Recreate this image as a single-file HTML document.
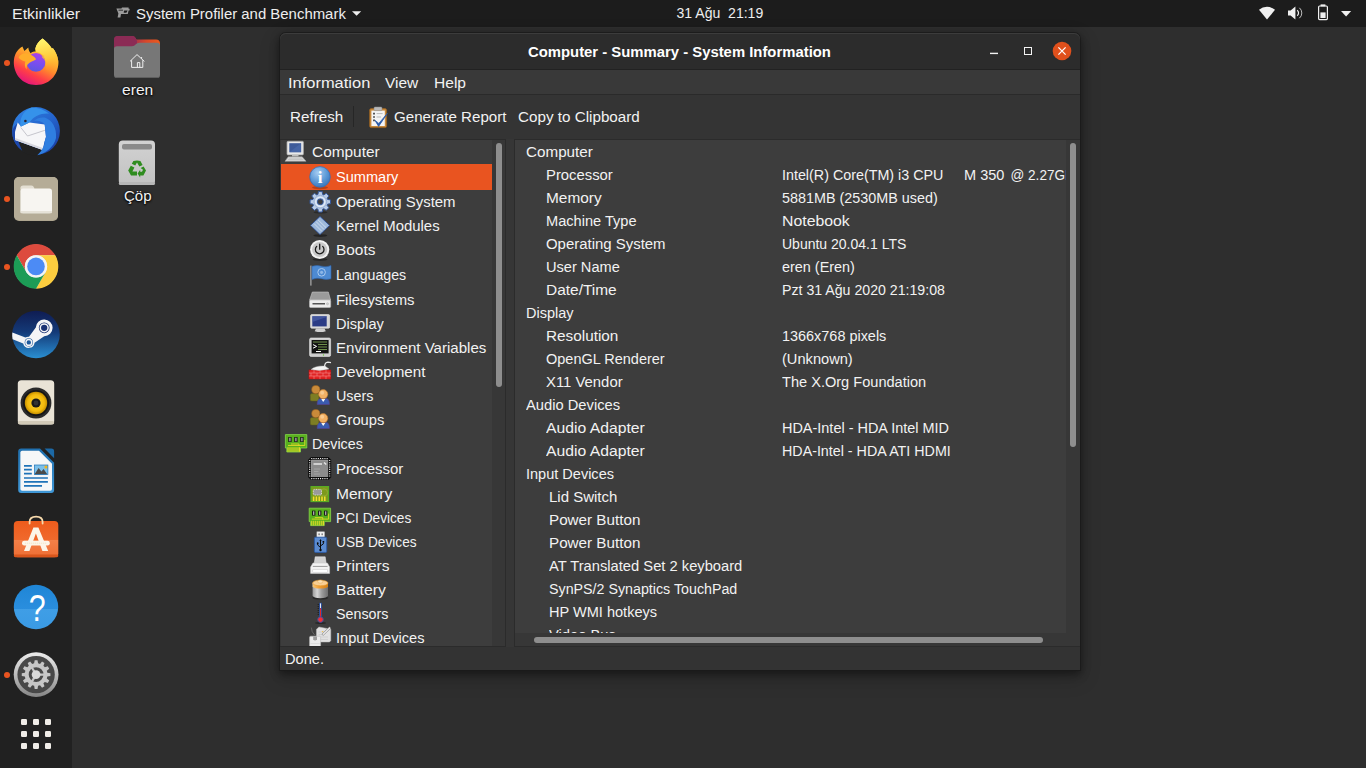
<!DOCTYPE html>
<html lang="tr">
<head>
<meta charset="utf-8">
<title>Computer - Summary - System Information</title>
<style>
*{box-sizing:border-box;margin:0;padding:0}
html,body{width:1366px;height:768px;overflow:hidden;background:#2e2e2e}
body{font-family:"Liberation Sans","DejaVu Sans",sans-serif;font-size:14px;color:#f2f2f2;position:relative}
.abs{position:absolute}
.t{position:absolute;white-space:pre;transform-origin:0 50%;line-height:20px;height:20px}
#topbar{position:absolute;left:0;top:0;width:1366px;height:27px;background:#1c1c1c;color:#eee}
#dock{position:absolute;left:0;top:27px;width:72px;height:741px;background:#212121}
#desktop .t{text-shadow:0 1px 2px #000,0 0 2px #000}
#win{position:absolute;left:280px;top:33px;width:800px;height:637px;background:#353535;border-radius:6px 6px 0 0;box-shadow:0 0 0 1px rgba(26,26,26,.8),0 3px 9px 1px rgba(0,0,0,.42),0 7px 20px 2px rgba(0,0,0,.16)}
#titlebar{position:absolute;left:0;top:0;width:800px;height:36px;background:#2c2c2c;border-radius:6px 6px 0 0;box-shadow:inset 0 1px 0 #3c3c3c}
#tsep{position:absolute;left:0;top:36px;width:800px;height:1px;background:#222}
#menubar{position:absolute;left:0;top:37px;width:800px;height:24px;background:#393939}
#msep{position:absolute;left:0;top:61px;width:800px;height:1px;background:#2a2a2a}
#toolbar{position:absolute;left:0;top:62px;width:800px;height:44px;background:#343434}
#body{position:absolute;left:0;top:106px;width:800px;height:508px;background:#363636}
#tree{position:absolute;left:1px;top:107px;width:211px;height:506px;background:#3d3d3d;overflow:hidden}
#treesb{position:absolute;left:212px;top:107px;width:13px;height:506px;background:#373737}
#treeborder{position:absolute;left:0;top:106px;width:226px;height:508px;border:1px solid #2b2b2b;border-left:0}
#detail{position:absolute;left:235px;top:107px;width:551px;height:493px;background:#3d3d3d;overflow:hidden}
#detailborder{position:absolute;left:234px;top:106px;width:566px;height:508px;border:1px solid #2b2b2b;border-right:0;background:#373737}
#status{position:absolute;left:0;top:614px;width:800px;height:23px;background:#333}
.thumb{position:absolute;background:#8e8e8e;border-radius:3px}
.sel{position:absolute;left:0;top:24px;width:211px;height:26px;background:#e95420}
</style>
</head>
<body>

<div id="topbar">
<span class="t" style="left:12px;top:4.1px;transform:scaleX(1.138);">Etkinlikler</span>
<svg class="abs" style="left:115px;top:6px" width="16" height="14" viewBox="115 6 16 14" ><path d="M116.4 8.6H121.4L122 7.6H128.6V8.8H129.6V10.4H124.2L123.6 12.6Q125 13 126.6 12.6L127.6 10.6H128.6L127.8 14H121L120.4 17.6H117.6L118.4 13.6L117 10Z" fill="#9c9c9c"/><path d="M118.5 10.2H123" stroke="#1c1c1c" stroke-width=".8"/></svg>
<span class="t" style="left:136px;top:4.1px;transform:scaleX(1.066);">System Profiler and Benchmark</span>
<svg class="abs" style="left:351px;top:10px" width="12" height="8" viewBox="351 10 12 8" ><path d="M352 11.2H361.2L356.6 15.8Z" fill="#eee"/></svg>
<span class="t" style="left:676px;top:3.1px;transform:translateX(0.50px) scaleX(1.004);">31 Ağu  21:19</span>
<svg class="abs" style="left:1258px;top:5px" width="18" height="16" viewBox="1258 5 18 16" ><path d="M1267 19.6L1259 9.8A12.4 12.4 0 0 1 1275 9.8Z" fill="#f0f0f0"/></svg>
<svg class="abs" style="left:1286px;top:5px" width="18" height="16" viewBox="1286 5 18 16" ><path d="M1288 10.6H1290.6L1295.4 6.4V19.6L1290.6 15.4H1288Z" fill="#f0f0f0"/><path d="M1297.2 10.2A3.6 3.6 0 0 1 1297.2 15.8" fill="none" stroke="#f0f0f0" stroke-width="1.2"/><path d="M1299.4 7.8A6.8 6.8 0 0 1 1299.4 18.2" fill="none" stroke="#bdbdbd" stroke-width="1"/></svg>
<svg class="abs" style="left:1316px;top:3px" width="14" height="19" viewBox="1316 3 14 19" ><rect x="1320.6" y="4.4" width="4.8" height="2" fill="#f0f0f0"/><rect x="1318.6" y="6" width="8.8" height="13.6" rx="1" fill="none" stroke="#f0f0f0" stroke-width="1.2"/><rect x="1320.4" y="12.4" width="5.2" height="5.6" fill="#f0f0f0"/></svg>
<svg class="abs" style="left:1340px;top:10px" width="12" height="8" viewBox="1340 10 12 8" ><path d="M1341 11H1351.2L1346.1 16.4Z" fill="#f0f0f0"/></svg>
</div>
<div id="dock"></div>
<svg class="abs" style="left:11px;top:36px" width="50" height="52" viewBox="11 36 50 52" ><defs><linearGradient id="ff1" gradientUnits="userSpaceOnUse" x1="50" y1="42" x2="27" y2="86"><stop offset="0" stop-color="#fff261"/><stop offset=".28" stop-color="#ffc232"/><stop offset=".52" stop-color="#ff8a2c"/><stop offset=".74" stop-color="#ff3f47"/><stop offset="1" stop-color="#e00f84"/></linearGradient>
<linearGradient id="ff2" gradientUnits="userSpaceOnUse" x1="38" y1="52" x2="33" y2="72"><stop offset="0" stop-color="#b23fe6"/><stop offset=".5" stop-color="#7d4df0"/><stop offset="1" stop-color="#5a57e0"/></linearGradient>
<linearGradient id="ff3" gradientUnits="userSpaceOnUse" x1="44" y1="40" x2="52" y2="70"><stop offset="0" stop-color="#fff36a"/><stop offset=".6" stop-color="#ffc83a"/><stop offset="1" stop-color="#ff9a2a" stop-opacity="0"/></linearGradient></defs>
<path d="M42.6 38.6C46 41.4 50 45 52 48.8L52.8 48C55.6 51.6 57.6 56 58.3 61C59.2 72 51.6 85 36 85C22 85 13.8 74 13.8 62.5C13.8 55 17 49.5 22.4 46.5L24.4 51L28.3 47.6C28.5 50 29.4 52 30.6 53.2C32.4 52 34 51.6 35.6 51.6L35.3 48.8C36 45 39 41 42.6 38.6Z" fill="url(#ff1)"/>
<circle cx="36" cy="62.4" r="9.4" fill="url(#ff2)"/>
<path d="M42.6 38.6C46 41.4 50 45 52 48.8L52.8 48C55.6 51.6 57.6 56 58.3 61C58.6 66 57.4 71 54.6 75C50 78 45 74 45.4 62.4C45.4 57 42 53 36 51.6L35.3 48.8C36 45 39 41 42.6 38.6Z" fill="url(#ff3)"/>
<path d="M40 54.2C42 54.2 43.6 55 44.8 56.2C43.6 56 42.4 56.2 41.6 56.8C44 58.6 45.4 61 45.4 62.4C45.4 59 43 55.6 40 54.2Z" fill="#ffb83a"/>
<path d="M18.6 57.6C20 54.4 24 52.6 27.6 53.6C30.6 54 34 56.4 36.2 59.2C33.6 61.4 30 61.6 27.6 64.4C26.6 66 26.4 68 26.8 69.6C24.6 67.4 24.4 64 25.4 61.6C22.6 61.2 20 59.6 18.6 57.6Z" fill="#ffad2a"/></svg>
<svg class="abs" style="left:11px;top:105px" width="50" height="52" viewBox="11 105 50 52" ><defs><linearGradient id="tb1" gradientUnits="userSpaceOnUse" x1="20" y1="110" x2="52" y2="152"><stop offset="0" stop-color="#2f7fe0"/><stop offset=".5" stop-color="#2463cc"/><stop offset="1" stop-color="#1b3fa4"/></linearGradient></defs>
<circle cx="36" cy="131" r="23.9" fill="url(#tb1)"/>
<path d="M12.2 131A23.9 23.9 0 0 0 22.5 150.8L19 141.6L15 140V132L17.7 123Q14 126 12.2 131Z" fill="#1c47ac"/>
<path d="M18.4 141.4L42.7 150L37.3 155.4A24.3 24.3 0 0 1 22.3 151.2Z" fill="#212121"/>
<path d="M15 132L17.7 122.6L21 126.4L29.4 122.6L44.7 124.4L46 137L44.2 143L42.7 149.9L15 140Z" fill="#f6f6f8"/>
<path d="M15 140L42.7 149.9L43 148L15.2 138Z" fill="#d6d6de"/>
<path d="M20.8 127.5L27.5 136L44.9 130.3" fill="none" stroke="#b9b9c2" stroke-width=".8"/>
<path d="M20.6 126.6C19.4 120 22 111 31.8 107.5C38 107.6 44 109.6 49 113.6C42 112.8 34 115.4 29.4 122.6L21.2 126.6Z" fill="#3592ea"/>
<path d="M44.7 117.6C52 120 57 128 56 138C54 147 46 153 37.3 155.3C43 150 45 144 46 137L44.7 124.4C42 121 38 120 34 121C37 118 41 117 44.7 117.6Z" fill="#2f7ee0"/>
<path d="M46 137L49 134L48 139L51 137L48.6 142L44.2 143Z" fill="#2f7ee0"/>
<circle cx="25.4" cy="121" r="1.3" fill="#2a2230"/></svg>
<svg class="abs" style="left:13px;top:176px" width="46" height="46" viewBox="13 176 46 46" ><rect x="14" y="177" width="44" height="44" rx="5" fill="#aea58f"/><rect x="14" y="177" width="44" height="43" rx="5" fill="#b5ac97"/>
<path d="M20.4 188.4Q20.4 185.6 23.2 185.6H31.4Q33.4 185.6 34 187.4L34.6 189.4H20.4Z" fill="#e4dfd3"/>
<rect x="20.4" y="188.6" width="31.6" height="24.6" rx="2.6" fill="#f7f5f1"/><rect x="20.4" y="211" width="31.6" height="2.2" rx="1" fill="#e6e2d8"/></svg>
<svg class="abs" style="left:12px;top:243px" width="48" height="48" viewBox="12 243 48 48" ><circle cx="36" cy="266.4" r="21.8" fill="#e8e8e8"/><path d="M36.00 255.25L55.31 255.25A22.3 22.3 0 0 0 16.69 255.25L26.34 271.97A11.15 11.15 0 0 1 36.00 255.25Z" fill="#dd4b3e"/><path d="M45.66 271.97L36.00 288.70A22.3 22.3 0 0 0 55.31 255.25L36.00 255.25A11.15 11.15 0 0 1 45.66 271.97Z" fill="#fccd3f"/><path d="M26.34 271.97L16.69 255.25A22.3 22.3 0 0 0 36.00 288.70L45.66 271.97A11.15 11.15 0 0 1 26.34 271.97Z" fill="#1c9c56"/><circle cx="36" cy="266.4" r="11.15" fill="#f4f4f4"/><circle cx="36" cy="266.4" r="8.8085" fill="#4c8bf5"/></svg>
<svg class="abs" style="left:11px;top:309px" width="50" height="51" viewBox="11 309 50 51" ><defs><linearGradient id="st1" x1="0" y1="0" x2="0" y2="1"><stop offset="0" stop-color="#0f1c52"/><stop offset=".45" stop-color="#143a78"/><stop offset="1" stop-color="#2a8fd2"/></linearGradient></defs>
<circle cx="36" cy="334.5" r="23.8" fill="url(#st1)"/>
<path d="M12.3 332.4L25.4 337.6A5.8 5.8 0 0 1 29 336.8L35.8 327.6A8.4 8.4 0 1 1 44.2 336.2L34.6 342.8A5.8 5.8 0 0 1 23.2 343.4L12.6 339.2Q12 336 12.3 332.4Z" fill="#f4f4f6"/>
<circle cx="44.2" cy="327.8" r="5.4" fill="#1a3274"/><circle cx="44.2" cy="327.8" r="3.9" fill="none" stroke="#f4f4f6" stroke-width="1.5"/>
<circle cx="28.8" cy="342.4" r="4.1" fill="#1f5a9c"/><circle cx="28.8" cy="342.4" r="2.9" fill="none" stroke="#f4f4f6" stroke-width="1.4"/></svg>
<svg class="abs" style="left:16px;top:379px" width="40" height="47" viewBox="16 379 40 47" ><defs><radialGradient id="rb1"><stop offset="0" stop-color="#ffd62e"/><stop offset=".75" stop-color="#f2b90c"/><stop offset="1" stop-color="#c48f00"/></radialGradient></defs>
<rect x="17.8" y="380.2" width="36.4" height="44.4" rx="3.6" fill="#e9e3d6"/><rect x="17.8" y="421" width="36.4" height="3.6" rx="1.8" fill="#d2cab8"/>
<circle cx="36" cy="403" r="15.4" fill="#2a2a2a"/><circle cx="36" cy="403" r="13" fill="#151515"/><circle cx="36" cy="403" r="11.2" fill="url(#rb1)"/><circle cx="36" cy="403" r="4.6" fill="#1a1a1a"/><circle cx="36" cy="403" r="2.4" fill="#333"/></svg>
<svg class="abs" style="left:16px;top:447px" width="40" height="47" viewBox="16 447 40 47" ><defs><linearGradient id="lo1" x1="0" y1="0" x2="0" y2="1"><stop offset="0" stop-color="#1f6fae"/><stop offset="1" stop-color="#3f97d6"/></linearGradient></defs>
<path d="M21.2 448.6H40L54.1 462.8V490Q54.1 493 51.1 493H21.2Q18.2 493 18.2 490V451.6Q18.2 448.6 21.2 448.6Z" fill="url(#lo1)"/>
<path d="M22.2 450.8H39L52 463.8V489Q52 490.8 50.2 490.8H22.2Q20.4 490.8 20.4 489V452.6Q20.4 450.8 22.2 450.8Z" fill="#f6f7f8"/>
<path d="M44.6 448.6H51.4Q54.1 448.6 54.1 451.4V458.2Z" fill="#1c69a6"/>
<path d="M24 465.8H31.8M24 469.7H31.8M24 473.6H31.8M24 478H47.9M24 481.9H47.9M24 485.8H42" stroke="#1f73b8" stroke-width="1.7"/>
<rect x="34.4" y="465" width="13.5" height="9.4" fill="#7cc0ea"/><path d="M34.4 474.4L38.6 468L41.4 471.4L43.6 469L47.4 474.4Z" fill="#4a4a4a"/><rect x="44.6" y="465.6" width="2.8" height="2.8" fill="#f4b41c"/><rect x="34.4" y="465" width="13.5" height="9.4" fill="none" stroke="#1f73b8" stroke-width=".7"/></svg>
<svg class="abs" style="left:12px;top:512px" width="48" height="47" viewBox="12 512 48 47" ><defs><linearGradient id="us1" x1="0" y1="0" x2="0" y2="1"><stop offset="0" stop-color="#ee5c1c"/><stop offset=".52" stop-color="#f0692c"/><stop offset=".52" stop-color="#f48048"/><stop offset="1" stop-color="#ee6e34"/></linearGradient></defs>
<rect x="13.8" y="521" width="44.5" height="36.2" rx="4" fill="url(#us1)"/><path d="M29.6 523.6V522Q29.6 516.6 36.1 516.6T42.6 522V523.6" fill="none" stroke="#f6d9ac" stroke-width="1.8" stroke-linecap="round"/><rect x="13.8" y="554.4" width="44.5" height="2.8" rx="1.4" fill="#d9561c"/>
<path d="M24 551L33.4 527.5H38.4L48.2 551H42.4L35.9 533.4L29.4 551Z" fill="#fcf5e8"/><rect x="22" y="540.8" width="27.8" height="4.7" rx="2.2" fill="#fcf5e8"/><path d="M25 543.2H47" stroke="#f0dcb4" stroke-width=".6" stroke-dasharray="1.2 .8"/></svg>
<svg class="abs" style="left:12px;top:583px" width="48" height="48" viewBox="12 583 48 48" ><defs><linearGradient id="hp1" x1="0" y1="0" x2="0" y2="1"><stop offset="0" stop-color="#1f86d6"/><stop offset=".55" stop-color="#2a8ede"/><stop offset=".55" stop-color="#3f9ee6"/><stop offset="1" stop-color="#3a9ae4"/></linearGradient></defs>
<circle cx="36" cy="607" r="22.2" fill="url(#hp1)"/>
<text x="37.2" y="621" font-family="Liberation Sans,sans-serif" font-size="37" text-anchor="middle" fill="#fff" transform="translate(37.2 0) scale(.82 1) translate(-37.2 0)">?</text></svg>
<svg class="abs" style="left:12px;top:651px" width="48" height="48" viewBox="12 651 48 48" ><defs><linearGradient id="gt1" x1="0" y1="0" x2="0" y2="1"><stop offset="0" stop-color="#ececec"/><stop offset=".5" stop-color="#bdbdbd"/><stop offset="1" stop-color="#858585"/></linearGradient></defs>
<circle cx="36.1" cy="674.6" r="22.4" fill="url(#gt1)"/><circle cx="36.1" cy="674.6" r="18.7" fill="#484848"/>
<path d="M47.33 672.64 L50.43 673.19 L50.43 676.01 L47.33 676.56 L46.81 678.52 L49.22 680.54 L47.80 682.99 L44.85 681.91 L43.41 683.35 L44.49 686.30 L42.04 687.72 L40.02 685.31 L38.06 685.83 L37.51 688.93 L34.69 688.93 L34.14 685.83 L32.18 685.31 L30.16 687.72 L27.71 686.30 L28.79 683.35 L27.35 681.91 L24.40 682.99 L22.98 680.54 L25.39 678.52 L24.87 676.56 L21.77 676.01 L21.77 673.19 L24.87 672.64 L25.39 670.68 L22.98 668.66 L24.40 666.21 L27.35 667.29 L28.79 665.85 L27.71 662.90 L30.16 661.48 L32.18 663.89 L34.14 663.37 L34.69 660.27 L37.51 660.27 L38.06 663.37 L40.02 663.89 L42.04 661.48 L44.49 662.90 L43.41 665.85 L44.85 667.29 L47.80 666.21 L49.22 668.66 L46.81 670.68Z M28.70 674.60 a7.40 7.40 0 1 0 14.80 0 a7.40 7.40 0 1 0 -14.80 0Z" fill="#c6c6c6" fill-rule="evenodd"/>
<path d="M36.1 674.6H45M36.1 674.6L31.4 666.8M36.1 674.6L31.4 682.4" stroke="#c6c6c6" stroke-width="2.2"/>
<circle cx="36.1" cy="674.6" r="4.4" fill="#dadada"/></svg>
<svg class="abs" style="left:20px;top:718px" width="32" height="32" viewBox="20 718 32 32" ><rect x="21" y="719" width="6" height="6" rx="1.2" fill="#f0ede8"/><rect x="33" y="719" width="6" height="6" rx="1.2" fill="#f0ede8"/><rect x="45" y="719" width="6" height="6" rx="1.2" fill="#f0ede8"/><rect x="21" y="731" width="6" height="6" rx="1.2" fill="#f0ede8"/><rect x="33" y="731" width="6" height="6" rx="1.2" fill="#f0ede8"/><rect x="45" y="731" width="6" height="6" rx="1.2" fill="#f0ede8"/><rect x="21" y="743" width="6" height="6" rx="1.2" fill="#f0ede8"/><rect x="33" y="743" width="6" height="6" rx="1.2" fill="#f0ede8"/><rect x="45" y="743" width="6" height="6" rx="1.2" fill="#f0ede8"/></svg>
<div class="abs" style="left:4px;top:59.5px;width:6px;height:6px;border-radius:50%;background:#e95420"></div>
<div class="abs" style="left:4px;top:196px;width:6px;height:6px;border-radius:50%;background:#e95420"></div>
<div class="abs" style="left:4px;top:264px;width:6px;height:6px;border-radius:50%;background:#e95420"></div>
<div class="abs" style="left:4px;top:672px;width:6px;height:6px;border-radius:50%;background:#e95420"></div>
<div id="desktop">
<svg class="abs" style="left:113px;top:35px" width="48" height="44" viewBox="113 35 48 44" ><defs><linearGradient id="fo1" x1="0" x2="1"><stop offset="0" stop-color="#8b2b55"/><stop offset=".45" stop-color="#a8324a"/><stop offset=".7" stop-color="#d8482a"/><stop offset="1" stop-color="#ea5a1e"/></linearGradient></defs>
<path d="M114 40Q114 36 118 36H132Q134.6 36 135.6 38L136.4 39.4H156Q160 39.4 160 43.4V60H114Z" fill="url(#fo1)"/>
<path d="M114 39.6Q114 36 118 36H132Q134.6 36 135.6 38L137 41V47H114Z" fill="#8b2b55"/>
<path d="M114 49Q114 46.2 117 46.2H132Q134.4 46.2 135.6 44.6Q137 42.8 139.4 42.8H157Q160 42.8 160 45.8V75Q160 78 157 78H117Q114 78 114 75Z" fill="#777"/>
<path d="M114 74.4V75Q114 78 117 78H157Q160 78 160 75V74.4Q160 77 157 77H117Q114 77 114 74.4Z" fill="#5e5e5e"/>
<path d="M130 61.4L137 54.6L144.4 61.4M131.6 60.2V67.4H142.8V60.2M137.4 67.4V62.6H139.8V67.4M141.6 58.6V57" fill="none" stroke="#efefef" stroke-width="1"/></svg>
<span class="t" style="left:122px;top:79.8px;transform:scaleX(1.116);">eren</span>
<svg class="abs" style="left:117px;top:139px" width="40" height="48" viewBox="117 139 40 48" ><defs><linearGradient id="tr1" x1="0" y1="0" x2="0" y2="1"><stop offset="0" stop-color="#d2d2d2"/><stop offset="1" stop-color="#c2c2c2"/></linearGradient></defs>
<rect x="118.8" y="140.4" width="36.2" height="44.6" rx="4" fill="url(#tr1)"/><rect x="118.8" y="182" width="36.2" height="3" rx="1.5" fill="#b6b6b6"/>
<rect x="122" y="144" width="30" height="5.6" rx="2" fill="#8a8a8a"/>
<g fill="#2f8c1f"><path d="M133.4 161L137 160.4L140.4 161L142.6 165L139.4 166.6L137 162.4L135.2 165.6L131.8 163.8Z"/><path d="M130.8 165.8L134.4 167.6L132.4 171.6H137V175.6H131L128.2 170.6Z"/><path d="M143.6 166.4L146 170.6L143.4 175.6H140.2V177.6L137.6 173.6L140.2 169.8V171.8H142L143 169.8L140.6 168Z"/></g></svg>
<span class="t" style="left:124px;top:185.9px;transform:scaleX(1.075);">Çöp</span>
</div>
<div id="win">
<div id="titlebar"></div><div id="tsep"></div><div id="menubar"></div><div id="msep"></div><div id="toolbar"></div><div id="body"></div>
<span class="t" style="left:248px;top:8.7px;font-weight:bold;color:#fff;transform:scaleX(1.061);">Computer - Summary - System Information</span>
<svg class="abs" style="left:708px;top:7px" width="90" height="24" viewBox="988 40 90 24" ><rect x="990" y="52.7" width="8" height="1.4" fill="#f2f2f2"/>
<rect x="1024.5" y="47.5" width="7" height="7" fill="none" stroke="#f4f4f4" stroke-width="1"/>
<circle cx="1062" cy="51" r="9.3" fill="#e0501c"/><path d="M1058.4 47.4L1065.6 54.6M1065.6 47.4L1058.4 54.6" stroke="#fff" stroke-width="1.3"/></svg>
<span class="t" style="left:8px;top:39.8px;transform:scaleX(1.175);">Information</span>
<span class="t" style="left:105px;top:39.8px;transform:scaleX(1.104);">View</span>
<span class="t" style="left:154px;top:39.8px;transform:scaleX(1.112);">Help</span>
<span class="t" style="left:10px;top:74.0px;transform:scaleX(1.086);">Refresh</span>
<div class="abs" style="left:73px;top:73px;width:1px;height:21px;background:#262626"></div>
<svg class="abs" style="left:88px;top:73px" width="22" height="24" viewBox="368 106 22 24" ><rect x="369.6" y="108.6" width="17" height="19" rx="1.6" fill="#c98a3c" stroke="#9a601c" stroke-width=".7"/>
<rect x="371.4" y="110.6" width="13.4" height="15.4" fill="#f4f4f4"/>
<rect x="374" y="107" width="8" height="3.6" rx="1" fill="#b9b9b9" stroke="#8a8a8a" stroke-width=".5"/>
<path d="M373 113.6H375M373 117H375M373 120.4H375" stroke="#555" stroke-width="1.6"/><path d="M376.6 113.6H382.6M376.6 117H381" stroke="#aaa" stroke-width=".8"/>
<path d="M375 120.4L378.6 126.4L387.4 113.4L378.8 123.4Z" fill="#2a5aa8" stroke="#2a5aa8" stroke-width=".8" stroke-linejoin="round"/></svg>
<span class="t" style="left:114px;top:74.0px;transform:scaleX(1.078);">Generate Report</span>
<span class="t" style="left:238px;top:74.0px;transform:scaleX(1.087);">Copy to Clipboard</span>
<div id="treeborder"></div><div id="treesb"><div class="thumb" style="left:4px;top:3px;width:6px;height:244px"></div></div>
<div id="tree"><div class="sel"></div>
<svg class="abs" style="left:3px;top:0px" width="24" height="23" viewBox="284 140 24 23" ><rect x="287" y="141.3" width="16.4" height="13.6" rx="1" fill="#e9e9e9" stroke="#a8a8a8" stroke-width=".8"/>
<rect x="289.3" y="143.2" width="11.8" height="9" fill="#3d5a99"/><path d="M289.3 152.2L301.1 143.2V152.2Z" fill="#4a69ab" opacity=".7"/>
<rect x="292" y="154.9" width="6.5" height="1.6" fill="#bdbdbd"/>
<path d="M288.3 156.8H302.2L306 161.2H285Z" fill="#e4e4e4" stroke="#9c9c9c" stroke-width=".7"/><path d="M288.5 158.2H302.6M287.6 159.6H303.6" stroke="#aaa" stroke-width=".6"/></svg>
<svg class="abs" style="left:27px;top:25px" width="25" height="25" viewBox="308 165 25 25" ><defs><radialGradient id="gi" cx=".4" cy=".3" r=".8"><stop offset="0" stop-color="#a6cdf2"/><stop offset=".55" stop-color="#5b98d6"/><stop offset="1" stop-color="#2f6bb5"/></radialGradient></defs>
<ellipse cx="320" cy="187.6" rx="8" ry="1.6" fill="#7a2a10" opacity=".45"/>
<circle cx="320" cy="176.9" r="10.3" fill="url(#gi)" stroke="#3a6fb4" stroke-width=".8"/>
<text x="320" y="183" font-family="Liberation Serif,serif" font-weight="bold" font-size="17" text-anchor="middle" fill="#fff">i</text></svg>
<svg class="abs" style="left:27px;top:50px" width="25" height="25" viewBox="308 190 25 25" ><ellipse cx="320.5" cy="212.3" rx="7" ry="1.3" fill="#000" opacity=".3"/>
<path d="M327.64 199.48 L330.53 199.91 L330.53 203.69 L327.64 204.12 L327.13 205.35 L328.87 207.70 L326.20 210.37 L323.85 208.63 L322.62 209.14 L322.19 212.03 L318.41 212.03 L317.98 209.14 L316.75 208.63 L314.40 210.37 L311.73 207.70 L313.47 205.35 L312.96 204.12 L310.07 203.69 L310.07 199.91 L312.96 199.48 L313.47 198.25 L311.73 195.90 L314.40 193.23 L316.75 194.97 L317.98 194.46 L318.41 191.57 L322.19 191.57 L322.62 194.46 L323.85 194.97 L326.20 193.23 L328.87 195.90 L327.13 198.25Z M317.40 201.80 a2.90 2.90 0 1 0 5.80 0 a2.90 2.90 0 1 0 -5.80 0Z" fill="#b9cce6" stroke="#34589c" stroke-width="1" fill-rule="evenodd" stroke-linejoin="round"/>
<circle cx="320.3" cy="201.8" r="4.6" fill="none" stroke="#e4ecf8" stroke-width="1.3"/><circle cx="320.3" cy="201.8" r="6.4" fill="none" stroke="#9ab2d8" stroke-width="1"/></svg>
<svg class="abs" style="left:27px;top:74px" width="25" height="25" viewBox="308 214 25 25" ><ellipse cx="320.3" cy="235.6" rx="7" ry="1.4" fill="#000" opacity=".4"/>
<path d="M320 216.4L329.6 225.4L320 234.6L310.5 225.4Z" fill="#9db8da" stroke="#2d4f95" stroke-width=".9" stroke-linejoin="round"/>
<path d="M316 221.5L324 229.5M318 219.8L326 227.6M314 223.5L322 231.5" stroke="#e6eef8" stroke-width=".9" opacity=".7"/></svg>
<svg class="abs" style="left:27px;top:98px" width="25" height="25" viewBox="308 238 25 25" ><ellipse cx="320" cy="259.6" rx="7.5" ry="1.4" fill="#000" opacity=".35"/>
<circle cx="319.7" cy="249.5" r="9.6" fill="#f2f2f2"/><circle cx="319.7" cy="249.5" r="7.6" fill="#c9c9c9"/>
<path d="M316.7 246.4a4.3 4.3 0 1 0 6 0M319.7 244.2v5" fill="none" stroke="#1c1c1c" stroke-width="1.3" stroke-linecap="round"/></svg>
<svg class="abs" style="left:27px;top:123px" width="25" height="25" viewBox="308 263 25 25" ><rect x="310" y="265.6" width="1.7" height="20" fill="#8c8c8c"/>
<path d="M312 266.3Q317 264.8 321.5 266.2T331 265.6V278.8Q326 280 321.5 278.7T312 279.4Z" fill="#4d8ad2" stroke="#2f67b0" stroke-width=".6"/>
<circle cx="321.6" cy="272.3" r="3.8" fill="none" stroke="#a9c9ee" stroke-width="1"/><circle cx="321.6" cy="272.3" r="1.6" fill="#8db6e6"/></svg>
<svg class="abs" style="left:27px;top:149px" width="25" height="22" viewBox="308 289 25 22" ><path d="M312.3 292H328.3L330.6 300H309.6Z" fill="#9b9b9b" stroke="#c8c8c8" stroke-width=".6"/>
<rect x="309.5" y="300" width="21.2" height="7.5" rx="1" fill="#ececec" stroke="#bdbdbd" stroke-width=".6"/>
<rect x="312.5" y="303" width="12.5" height="1.5" fill="#555"/><circle cx="327.5" cy="303.8" r="1.1" fill="#cfcfcf" stroke="#aaa" stroke-width=".4"/></svg>
<svg class="abs" style="left:27px;top:173px" width="25" height="22" viewBox="308 313 25 22" ><rect x="310.6" y="314.6" width="19" height="13.6" rx="1.2" fill="#d6d6d6" stroke="#f0f0f0" stroke-width=".6"/>
<rect x="312.3" y="316.2" width="14.4" height="10.2" fill="#2b3c86"/><path d="M312.3 322L326.7 317V316.2H312.3Z" fill="#5167ad" opacity=".6"/>
<path d="M316 328.4H324.5L325.8 331.2Q320.3 333 314.7 331.2Z" fill="#cfcfcf"/></svg>
<svg class="abs" style="left:27px;top:196px" width="25" height="23" viewBox="308 336 25 23" ><rect x="309.6" y="338" width="21" height="18.4" rx="1.5" fill="#cdcdcd" stroke="#eee" stroke-width=".6"/>
<rect x="311.6" y="340" width="17" height="13.4" fill="#121212"/>
<path d="M313 342H327M318 344.5H327M318 347H327M318 349.5H327" stroke="#6f8f4a" stroke-width="1"/><path d="M313 344.6L316.6 346.4L313 348.2" fill="none" stroke="#fff" stroke-width="1"/>
<rect x="316" y="351" width="5" height="1" fill="#fff"/><circle cx="323.5" cy="355" r=".7" fill="#6c3"/></svg>
<svg class="abs" style="left:27px;top:220px" width="25" height="22" viewBox="308 360 25 22" ><rect x="309" y="370" width="21.8" height="9" fill="#e02424" stroke="#b80f0f" stroke-width=".6"/>
<path d="M309 373H330.8M309 376H330.8M314 370V373M320 370V373M326 370V373M317 373V376M323 373V376M311 373V376M329 373V376M314 376V379M320 376V379M326 376V379" stroke="#f58a8a" stroke-width=".6"/>
<path d="M311 369.6Q315 365.5 325 366L329 369Q320 371.5 311 369.6Z" fill="#f4f4f4" stroke="#bbb" stroke-width=".4"/><path d="M324.5 367.5Q324.5 362.4 328 362.2L331 362.6" fill="none" stroke="#e8e8e8" stroke-width="1.2"/></svg>
<svg class="abs" style="left:27px;top:244px" width="25" height="22" viewBox="308 384 25 22" ><rect x="310.3" y="393.6" width="8.6" height="7.4" rx="1.6" fill="#7d7d24" stroke="#5f5f18" stroke-width=".5"/>
<circle cx="315.8" cy="389.6" r="4.1" fill="#c98a3a" stroke="#9a5f1c" stroke-width=".6"/>
<path d="M317.2 404.4Q317.2 399 320.5 398.6H326Q329.4 398.6 329.4 404.4V404.4H317.2Z" fill="#3a5cb0" stroke="#5b3f9a" stroke-width=".6"/>
<path d="M321.3 399L323.2 402L325.2 399Z" fill="#fff"/>
<circle cx="323.2" cy="394.2" r="4.6" fill="#f2b065" stroke="#c47a26" stroke-width=".6"/><circle cx="322.2" cy="392.8" r="2" fill="#f9d09a" opacity=".8"/></svg>
<svg class="abs" style="left:27px;top:268px" width="25" height="22" viewBox="308 408 25 22" ><rect x="310.3" y="417.6" width="8.6" height="7.4" rx="1.6" fill="#7d7d24" stroke="#5f5f18" stroke-width=".5"/>
<circle cx="315.8" cy="413.6" r="4.1" fill="#c98a3a" stroke="#9a5f1c" stroke-width=".6"/>
<path d="M317.2 428.4Q317.2 423 320.5 422.6H326Q329.4 422.6 329.4 428.4V428.4H317.2Z" fill="#3a5cb0" stroke="#5b3f9a" stroke-width=".6"/>
<path d="M321.3 423L323.2 426L325.2 423Z" fill="#fff"/>
<circle cx="323.2" cy="418.2" r="4.6" fill="#f2b065" stroke="#c47a26" stroke-width=".6"/><circle cx="322.2" cy="416.8" r="2" fill="#f9d09a" opacity=".8"/></svg>
<svg class="abs" style="left:3px;top:293px" width="25" height="21" viewBox="284 433 25 21" ><g transform="translate(0 0)"><path d="M285.4 434.6H306.8V448H300.5V452H286.8V448H285.4Z" fill="#58b01e" stroke="#86d84a" stroke-width=".8"/>
<g fill="#1a1a1a"><rect x="288.2" y="437" width="3.4" height="5"/><rect x="294.2" y="437" width="3.4" height="5"/><rect x="300.2" y="437" width="3.4" height="5"/></g>
<g fill="#bbb"><rect x="289.3" y="437.7" width="1.2" height="3.6"/><rect x="295.3" y="437.7" width="1.2" height="3.6"/><rect x="301.3" y="437.7" width="1.2" height="3.6"/></g>
<path d="M288 445.5H304.8V440M291 444H299V446" fill="none" stroke="#f0dc28" stroke-width=".8"/>
<path d="M288 447.2v4.6M290 447.2v4.6M292 447.2v4.6M294 447.2v4.6M296 447.2v4.6M298 447.2v4.6M299.6 447.2v4.6" stroke="#f0dc28" stroke-width="1"/></g></svg>
<svg class="abs" style="left:26px;top:316px" width="26" height="26" viewBox="307 456 26 26" ><path d="M311 457H328.4L331.2 459.8V477.2L328.4 480H311L308.2 477.2V459.8Z" fill="#0c0c0c"/>
<path d="M311.2 458.5H328.2M311.2 478.6H328.2M309.7 460V477M329.7 460V477" stroke="#f4f4f4" stroke-width="1.1" stroke-dasharray="1.1 1.1"/>
<rect x="311.4" y="460.2" width="16.8" height="16.8" fill="#8c8c8c"/><path d="M311.4 477V460.2H328.2" fill="none" stroke="#b5b5b5" stroke-width=".8"/>
<path d="M313.5 464H322M324 462.4L326.3 464.6" stroke="#e6e6e6" stroke-width="1.4"/><path d="M314 469H320M314 471.5H318.5M314 474H320" stroke="#a9a9a9" stroke-width=".8"/></svg>
<svg class="abs" style="left:27px;top:345px" width="25" height="19" viewBox="308 485 25 19" ><rect x="311" y="486.6" width="17.6" height="15" fill="#7d9a1c" stroke="#58b024" stroke-width="1.1"/>
<circle cx="324" cy="492.5" r="3.6" fill="none" stroke="#93ae3a" stroke-width=".8"/>
<rect x="313.3" y="489.4" width="8.2" height="5.6" rx="1" fill="#9a9a9a" stroke="#e4e4e4" stroke-width=".9" stroke-dasharray="1 .7"/>
<path d="M313.6 496.6V501M316.4 496.6V501M319.2 496.6V501M322 496.6V501M324.8 496.6V501" stroke="#f4e02c" stroke-width="1.5"/></svg>
<svg class="abs" style="left:27px;top:367px" width="25" height="21" viewBox="308 507 25 21" ><g transform="translate(23.8 73.6)"><path d="M285.4 434.6H306.8V448H300.5V452H286.8V448H285.4Z" fill="#58b01e" stroke="#86d84a" stroke-width=".8"/>
<g fill="#1a1a1a"><rect x="288.2" y="437" width="3.4" height="5"/><rect x="294.2" y="437" width="3.4" height="5"/><rect x="300.2" y="437" width="3.4" height="5"/></g>
<g fill="#bbb"><rect x="289.3" y="437.7" width="1.2" height="3.6"/><rect x="295.3" y="437.7" width="1.2" height="3.6"/><rect x="301.3" y="437.7" width="1.2" height="3.6"/></g>
<path d="M288 445.5H304.8V440M291 444H299V446" fill="none" stroke="#f0dc28" stroke-width=".8"/>
<path d="M288 447.2v4.6M290 447.2v4.6M292 447.2v4.6M294 447.2v4.6M296 447.2v4.6M298 447.2v4.6M299.6 447.2v4.6" stroke="#f0dc28" stroke-width="1"/></g></svg>
<svg class="abs" style="left:31px;top:390px" width="17" height="25" viewBox="312 530 17 25" ><rect x="316.9" y="531.8" width="7.6" height="5.6" fill="#f2f2f2" stroke="#bdbdbd" stroke-width=".5"/><rect x="318.3" y="533.4" width="1.6" height="1.8" fill="#888"/><rect x="321.4" y="533.4" width="1.6" height="1.8" fill="#888"/>
<rect x="314.4" y="537.2" width="12.3" height="15.2" rx="1.2" fill="#5b8bd0" stroke="#2a5aa6" stroke-width=".9"/>
<path d="M320.5 540V550M320.5 547.5L317.7 545V543.4M320.5 546L323.4 543.8V542.4" fill="none" stroke="#0a0a0a" stroke-width="1"/><circle cx="320.5" cy="550" r="1.2" fill="#0a0a0a"/><circle cx="317.7" cy="543.2" r=".9" fill="#0a0a0a"/><rect x="322.6" y="541" width="1.6" height="1.6" fill="#0a0a0a"/><path d="M319.4 541L320.5 539L321.6 541Z" fill="#0a0a0a"/></svg>
<svg class="abs" style="left:27px;top:415px" width="25" height="21" viewBox="308 555 25 21" ><path d="M315.2 556.8H325.2L326.4 565H314Z" fill="#d2d2d2" stroke="#f0f0f0" stroke-width=".5"/>
<path d="M313 563H327.4L329.6 567V573.4H310.6V567Z" fill="#f3f3f3" stroke="#c9c9c9" stroke-width=".6"/>
<rect x="312.6" y="569.4" width="15" height="3" rx=".6" fill="#fff" stroke="#c2c2c2" stroke-width=".5"/><path d="M312.8 566.4H327.6" stroke="#8f8f8f" stroke-width=".9"/></svg>
<svg class="abs" style="left:29px;top:437px" width="21" height="24" viewBox="310 577 21 24" ><defs><linearGradient id="gb" x1="0" x2="1"><stop offset="0" stop-color="#9a9a9a"/><stop offset=".3" stop-color="#d4d4d4"/><stop offset=".6" stop-color="#9c9c9c"/><stop offset="1" stop-color="#6e6e6e"/></linearGradient>
<linearGradient id="gbo" x1="0" x2="1"><stop offset="0" stop-color="#f7c77a"/><stop offset=".4" stop-color="#f2a136"/><stop offset="1" stop-color="#d07f18"/></linearGradient></defs>
<ellipse cx="320.3" cy="598" rx="8" ry="1.6" fill="#000" opacity=".35"/>
<path d="M312.6 583V595.6A7.7 2.6 0 0 0 328 595.6V583Z" fill="url(#gb)"/>
<path d="M312.6 583V586.2A7.7 2.4 0 0 0 328 586.2V583Z" fill="url(#gbo)"/>
<ellipse cx="320.3" cy="583" rx="7.7" ry="2.8" fill="#f8cf94" stroke="#e69a2e" stroke-width=".6"/>
<ellipse cx="320.3" cy="581.6" rx="2.6" ry="1.6" fill="#fbe0b4" stroke="#e0a040" stroke-width=".4"/></svg>
<svg class="abs" style="left:31px;top:461px" width="17" height="24" viewBox="312 601 17 24" ><ellipse cx="320.5" cy="623" rx="5.5" ry="1" fill="#000" opacity=".35"/>
<rect x="319.2" y="602.8" width="2.6" height="14" fill="#2a52a8"/><rect x="320" y="603.4" width="1" height="4.6" fill="#dfe8f8"/><rect x="320" y="608.4" width="1" height="9" fill="#e8242c"/>
<path d="M317.6 604.5H319M317.6 606.5H319M317.6 608.5H319M317.6 610.5H319M317.6 612.5H319M317.6 614.5H319" stroke="#111" stroke-width=".6"/>
<circle cx="320.5" cy="619.6" r="2.8" fill="#f03038" stroke="#2a52a8" stroke-width=".9"/></svg>
<svg class="abs" style="left:27px;top:486px" width="25" height="22" viewBox="308 626 25 22" ><path d="M317.5 628.2L319 627L330.8 629.2V640.6L329.6 642H316.4V629.6Z" fill="#e2e2e2" stroke="#b8b8b8" stroke-width=".5"/>
<path d="M318.6 632H326M318.6 634.6H324M318.6 637H328M318.6 639.4H328" stroke="#c8c8c8" stroke-width=".7"/><circle cx="322.6" cy="631.6" r=".7" fill="#f2c040"/>
<path d="M322.4 635L330.2 627.4" stroke="#8c8c8c" stroke-width="2.4"/><path d="M322.8 634.6L330 627.6" stroke="#fafafa" stroke-width="1.2"/>
<path d="M311.4 627.6Q311.4 632 314.6 635" fill="none" stroke="#777" stroke-width=".7"/>
<rect x="309.6" y="636.2" width="11" height="11" rx="1.2" fill="#ececec" stroke="#bcbcbc" stroke-width=".6"/><path d="M313.2 636.4V639.2Q315 641.6 317 639.2V636.4Z" fill="#9e9e9e"/><path d="M310.5 643.6H319.8" stroke="#d0d0d0" stroke-width=".6"/></svg>
<span class="t" style="left:31px;top:2.3px;transform:scaleX(1.101);">Computer</span>
<span class="t" style="left:55px;top:26.9px;color:#fff;transform:scaleX(1.041);">Summary</span>
<span class="t" style="left:55px;top:51.9px;transform:scaleX(1.067);">Operating System</span>
<span class="t" style="left:55px;top:76.3px;transform:scaleX(1.065);">Kernel Modules</span>
<span class="t" style="left:55px;top:99.8px;transform:scaleX(1.101);">Boots</span>
<span class="t" style="left:55px;top:124.8px;transform:scaleX(1.012);">Languages</span>
<span class="t" style="left:55px;top:149.9px;transform:scaleX(1.063);">Filesystems</span>
<span class="t" style="left:55px;top:173.9px;transform:scaleX(1.042);">Display</span>
<span class="t" style="left:55px;top:197.8px;transform:scaleX(1.075);">Environment Variables</span>
<span class="t" style="left:55px;top:221.8px;transform:scaleX(1.084);">Development</span>
<span class="t" style="left:55px;top:245.7px;transform:scaleX(1.025);">Users</span>
<span class="t" style="left:55px;top:269.7px;transform:scaleX(1.053);">Groups</span>
<span class="t" style="left:31px;top:293.9px;transform:scaleX(1.021);">Devices</span>
<span class="t" style="left:55px;top:318.9px;transform:scaleX(1.067);">Processor</span>
<span class="t" style="left:55px;top:343.9px;transform:scaleX(1.111);">Memory</span>
<span class="t" style="left:55px;top:368.3px;transform:scaleX(0.978);">PCI Devices</span>
<span class="t" style="left:55px;top:392.3px;transform:scaleX(0.977);">USB Devices</span>
<span class="t" style="left:55px;top:415.8px;transform:scaleX(1.110);">Printers</span>
<span class="t" style="left:55px;top:439.9px;transform:scaleX(1.123);">Battery</span>
<span class="t" style="left:55px;top:463.9px;transform:scaleX(1.020);">Sensors</span>
<span class="t" style="left:55px;top:487.8px;transform:scaleX(1.043);">Input Devices</span>
</div>
<div id="detailborder"></div>
<div class="thumb" style="left:790px;top:110px;width:6px;height:304px"></div>
<div class="thumb" style="left:254px;top:604px;width:509px;height:6px"></div>
<div id="detail">
<span class="t" style="left:11px;top:2.0px;transform:scaleX(1.087);">Computer</span>
<span class="t" style="left:31px;top:25.0px;transform:scaleX(1.059);">Processor</span>
<span class="t" style="left:267px;top:25.0px;transform:scaleX(1.022);">Intel(R) Core(TM) i3 CPU</span>
<span class="t" style="left:449px;top:25.0px;transform:scaleX(1.037);">M 350</span>
<span class="t" style="left:495px;top:25.0px;transform:translateX(0.50px) scaleX(0.970);">@ 2.27GHz</span>
<span class="t" style="left:31px;top:48.0px;transform:scaleX(1.101);">Memory</span>
<span class="t" style="left:267px;top:48.0px;transform:scaleX(1.026);">5881MB (2530MB used)</span>
<span class="t" style="left:31px;top:71.0px;transform:scaleX(1.042);">Machine Type</span>
<span class="t" style="left:267px;top:71.0px;transform:scaleX(1.131);">Notebook</span>
<span class="t" style="left:31px;top:94.0px;transform:scaleX(1.067);">Operating System</span>
<span class="t" style="left:267px;top:94.0px;">Ubuntu 20.04.1 LTS</span>
<span class="t" style="left:31px;top:117.0px;transform:scaleX(1.042);">User Name</span>
<span class="t" style="left:267px;top:117.0px;transform:scaleX(1.029);">eren (Eren)</span>
<span class="t" style="left:31px;top:140.0px;transform:scaleX(1.104);">Date/Time</span>
<span class="t" style="left:267px;top:140.0px;transform:scaleX(1.011);">Pzt 31 Ağu 2020 21:19:08</span>
<span class="t" style="left:11px;top:163.0px;transform:scaleX(1.035);">Display</span>
<span class="t" style="left:31px;top:186.0px;transform:scaleX(1.094);">Resolution</span>
<span class="t" style="left:267px;top:186.0px;transform:scaleX(1.031);">1366x768 pixels</span>
<span class="t" style="left:31px;top:209.0px;transform:scaleX(1.035);">OpenGL Renderer</span>
<span class="t" style="left:267px;top:209.0px;transform:scaleX(1.045);">(Unknown)</span>
<span class="t" style="left:31px;top:232.0px;transform:scaleX(1.062);">X11 Vendor</span>
<span class="t" style="left:267px;top:232.0px;transform:scaleX(1.041);">The X.Org Foundation</span>
<span class="t" style="left:11px;top:255.0px;transform:scaleX(1.051);">Audio Devices</span>
<span class="t" style="left:31px;top:278.0px;transform:scaleX(1.123);">Audio Adapter</span>
<span class="t" style="left:267px;top:278.0px;transform:scaleX(1.032);">HDA-Intel - HDA Intel MID</span>
<span class="t" style="left:31px;top:301.0px;transform:scaleX(1.123);">Audio Adapter</span>
<span class="t" style="left:267px;top:301.0px;transform:scaleX(1.020);">HDA-Intel - HDA ATI HDMI</span>
<span class="t" style="left:11px;top:324.0px;transform:scaleX(1.037);">Input Devices</span>
<span class="t" style="left:34px;top:347.0px;transform:scaleX(1.071);">Lid Switch</span>
<span class="t" style="left:34px;top:370.0px;transform:scaleX(1.087);">Power Button</span>
<span class="t" style="left:34px;top:393.0px;transform:scaleX(1.087);">Power Button</span>
<span class="t" style="left:34px;top:416.0px;transform:scaleX(1.051);">AT Translated Set 2 keyboard</span>
<span class="t" style="left:34px;top:439.0px;transform:scaleX(1.018);">SynPS/2 Synaptics TouchPad</span>
<span class="t" style="left:34px;top:462.0px;transform:scaleX(1.039);">HP WMI hotkeys</span>
<span class="t" style="left:34px;top:485.0px;transform:scaleX(1.053);">Video Bus</span>
</div>
<div id="status"></div>
<span class="t" style="left:5px;top:616.1px;transform:scaleX(1.046);">Done.</span>
</div>
</body>
</html>
